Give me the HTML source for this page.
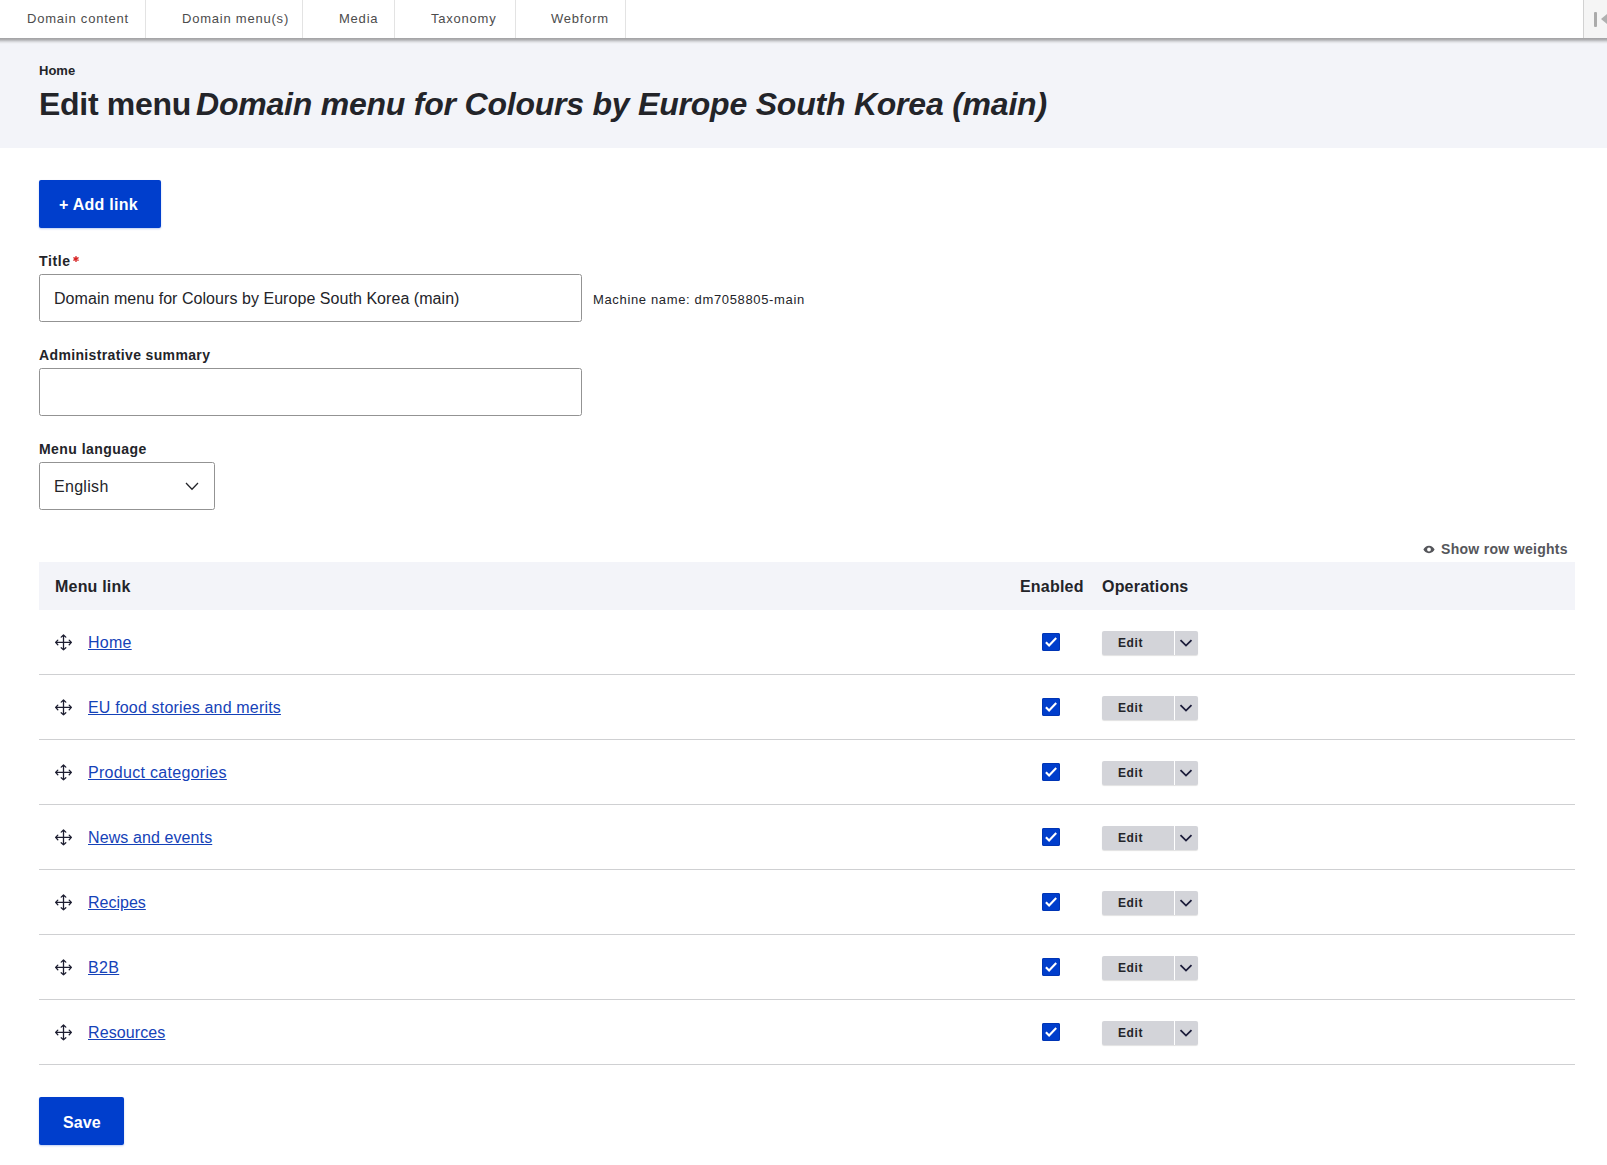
<!DOCTYPE html>
<html><head><meta charset="utf-8">
<style>
*{box-sizing:border-box;margin:0;padding:0}
html,body{width:1607px;height:1165px;overflow:hidden;background:#fff}
body{font-family:"Liberation Sans",sans-serif;color:#232429;position:relative}
.abs{position:absolute;white-space:nowrap}
#toolbar{position:absolute;left:0;top:0;width:1607px;height:38px;background:#fff;z-index:3}
#tbshadow{position:absolute;left:0;top:38px;width:1607px;height:6px;z-index:2;background:linear-gradient(to bottom,#a3a3a5 0px,#a8a8aa 1px,#b4b4b7 2px,#cbccd0 3px,#dfe0e4 4px,#ebecf0 5px,#f3f4f9 6px)}
#toolbar .sep{position:absolute;top:0;width:1px;height:38px;background:#e3e3e3}
#toolbar .tt{position:absolute;top:11px;font-size:13px;line-height:16px;color:#4c4c4c;letter-spacing:.78px;white-space:nowrap}
#header{position:absolute;left:0;top:39px;width:1607px;height:109px;background:#f3f4f9}
.crumb{position:absolute;left:39px;top:63px;font-size:13px;line-height:16px;font-weight:bold;color:#232429}
h1{position:absolute;left:39px;top:84px;font-size:32px;line-height:40px;font-weight:bold;white-space:nowrap;color:#232429;letter-spacing:-.3px}
.btn{position:absolute;background:#003ecc;color:#fff;font-weight:bold;font-size:16px;border-radius:2px;text-align:center;box-shadow:0 1px 2px rgba(0,62,204,.25)}
.label{position:absolute;left:39px;font-size:14px;line-height:18px;font-weight:bold;color:#232429;white-space:nowrap}
.input{position:absolute;left:39px;border:1px solid #939393;border-radius:2.5px;background:#fff;font-size:16px}
.thbg{position:absolute;left:39px;top:562px;width:1536px;height:48px;background:#f3f4f9}
.th{position:absolute;top:577px;font-size:16px;line-height:20px;font-weight:bold;white-space:nowrap;letter-spacing:.2px}
.rowline{position:absolute;left:39px;width:1536px;height:1px;background:#cfd0d2}
.drag{position:absolute}
.mlink{position:absolute;left:88px;font-size:16px;line-height:22px;color:#1542b8;text-decoration:underline;text-underline-offset:1px;white-space:nowrap;letter-spacing:0px}
.cb{position:absolute;left:1042px;width:18px;height:18px;background:#003ecc;border-radius:2px;box-shadow:inset 0 0 0 1px #0035b5}
.cb svg{position:absolute;left:0;top:0}
.ebtn{position:absolute;left:1102px;width:96px;height:24px;background:#d3d4d9;border-radius:2px;box-shadow:0 1px 1px rgba(0,0,0,.12)}
.et{position:absolute;left:16px;top:5px;font-size:12px;line-height:14px;font-weight:bold;color:#232429;letter-spacing:.6px}
.esep{position:absolute;left:72px;top:0;width:1px;height:24px;background:#fff}
.chev{position:absolute;left:77px;top:7px}
</style></head><body>
<div id="toolbar">
  <div class="tt" style="left:27px">Domain content</div>
  <div class="sep" style="left:145px"></div>
  <div class="tt" style="left:182px">Domain menu(s)</div>
  <div class="sep" style="left:302px"></div>
  <div class="tt" style="left:339px">Media</div>
  <div class="sep" style="left:394px"></div>
  <div class="tt" style="left:431px">Taxonomy</div>
  <div class="sep" style="left:515px"></div>
  <div class="tt" style="left:551px">Webform</div>
  <div class="sep" style="left:625px"></div>
  <div class="abs" style="left:1583px;top:0;width:24px;height:38px;border-left:1px solid #d2d2d2;background:#f5f5f5">
    <div class="abs" style="left:10px;top:11.5px;width:3px;height:15px;background:#ababab;border-radius:1px"></div>
    <div class="abs" style="left:17px;top:13.5px;width:0;height:0;border-top:5px solid transparent;border-bottom:5px solid transparent;border-right:6px solid #b0b0b0"></div>
  </div>
</div>
<div id="header"></div><div id="tbshadow"></div>
<div class="crumb">Home</div>
<h1>Edit menu</h1><h1 style="left:196px;letter-spacing:-.22px"><i>Domain menu for Colours by Europe South Korea (main)</i></h1>

<div class="btn" style="left:39px;top:180px;width:122px;height:48px"></div><div class="abs" style="left:59px;top:195px;font-size:16px;line-height:20px;font-weight:bold;color:#fff;letter-spacing:.25px">+ Add link</div>

<div class="label" style="top:252px;letter-spacing:.6px">Title</div>
<svg class="abs" style="left:72.6px;top:255.9px" width="6" height="6" viewBox="0 0 6 6"><path d="M3 0.6V5.4M0.92 1.8L5.08 4.2M0.92 4.2L5.08 1.8" stroke="#d72222" stroke-width="1.35" stroke-linecap="round"/></svg>
<div class="input" style="top:274px;width:543px;height:48px"></div>
<div class="abs" style="left:54px;top:289px;font-size:16px;line-height:20px;letter-spacing:.05px">Domain menu for Colours by Europe South Korea (main)</div>
<div class="abs" style="left:593px;top:292px;font-size:13px;line-height:16px;letter-spacing:.65px">Machine name: dm7058805-main</div>

<div class="label" style="top:346px;letter-spacing:.36px">Administrative summary</div>
<div class="input" style="top:368px;width:543px;height:48px"></div>

<div class="label" style="top:440px;letter-spacing:.45px">Menu language</div>
<div class="input" style="top:462px;width:176px;height:48px"></div>
<div class="abs" style="left:54px;top:477px;font-size:16px;line-height:20px;letter-spacing:.3px">English</div>
<svg class="abs" style="left:184px;top:481px" width="16" height="10" viewBox="0 0 16 10"><path d="M2 2L8 8.3L14 2" fill="none" stroke="#232429" stroke-width="1.25"/></svg>

<svg class="abs" style="left:1423px;top:544.5px" width="12" height="9" viewBox="0 0 12 9"><path d="M6 0.8C3.2 0.8 1.2 3 0.4 4.5C1.2 6 3.2 8.2 6 8.2C8.8 8.2 10.8 6 11.6 4.5C10.8 3 8.8 0.8 6 0.8ZM6 2.6A1.9 1.9 0 1 1 6 6.4A1.9 1.9 0 1 1 6 2.6Z" fill="#55565b" fill-rule="evenodd"/></svg>
<div class="abs" style="left:1441px;top:540px;font-size:14px;line-height:18px;font-weight:bold;color:#55565b;letter-spacing:.3px">Show row weights</div>

<div class="thbg"></div>
<div class="th" style="left:55px">Menu link</div>
<div class="th" style="left:1020px">Enabled</div>
<div class="th" style="left:1102px">Operations</div>

<div class="rowline" style="top:674px"></div>
<svg class="drag" width="20" height="20" viewBox="0 0 20 20" style="left:53px;top:632px"><g fill="none" stroke="#1c1d30" stroke-width="1.3" stroke-linecap="round" stroke-linejoin="round"><path d="M10.5 3V17.8M2.7 10.4H18.3M8.2 5.1L10.5 2.9L12.8 5.1M8.2 15.7L10.5 17.9L12.8 15.7M4.8 8.1L2.6 10.4L4.8 12.7M16.2 8.1L18.4 10.4L16.2 12.7"/></g></svg>
<a class="mlink" style="top:632px;letter-spacing:0.25px">Home</a>
<div class="cb" style="top:633px"><svg width="18" height="18" viewBox="0 0 18 18"><path d="M3.9 9.2L7.1 12.5L14.2 5" fill="none" stroke="#fff" stroke-width="2.1"/></svg></div>
<div class="ebtn" style="top:631px"><span class="et">Edit</span><span class="esep"></span><svg class="chev" width="14" height="10" viewBox="0 0 14 10"><path d="M1.5 2.2L7 7.6L12.5 2.2" fill="none" stroke="#1b1c3a" stroke-width="1.8"/></svg></div>
<div class="rowline" style="top:739px"></div>
<svg class="drag" width="20" height="20" viewBox="0 0 20 20" style="left:53px;top:697px"><g fill="none" stroke="#1c1d30" stroke-width="1.3" stroke-linecap="round" stroke-linejoin="round"><path d="M10.5 3V17.8M2.7 10.4H18.3M8.2 5.1L10.5 2.9L12.8 5.1M8.2 15.7L10.5 17.9L12.8 15.7M4.8 8.1L2.6 10.4L4.8 12.7M16.2 8.1L18.4 10.4L16.2 12.7"/></g></svg>
<a class="mlink" style="top:697px;letter-spacing:0.17px">EU food stories and merits</a>
<div class="cb" style="top:698px"><svg width="18" height="18" viewBox="0 0 18 18"><path d="M3.9 9.2L7.1 12.5L14.2 5" fill="none" stroke="#fff" stroke-width="2.1"/></svg></div>
<div class="ebtn" style="top:696px"><span class="et">Edit</span><span class="esep"></span><svg class="chev" width="14" height="10" viewBox="0 0 14 10"><path d="M1.5 2.2L7 7.6L12.5 2.2" fill="none" stroke="#1b1c3a" stroke-width="1.8"/></svg></div>
<div class="rowline" style="top:804px"></div>
<svg class="drag" width="20" height="20" viewBox="0 0 20 20" style="left:53px;top:762px"><g fill="none" stroke="#1c1d30" stroke-width="1.3" stroke-linecap="round" stroke-linejoin="round"><path d="M10.5 3V17.8M2.7 10.4H18.3M8.2 5.1L10.5 2.9L12.8 5.1M8.2 15.7L10.5 17.9L12.8 15.7M4.8 8.1L2.6 10.4L4.8 12.7M16.2 8.1L18.4 10.4L16.2 12.7"/></g></svg>
<a class="mlink" style="top:762px;letter-spacing:0.3px">Product categories</a>
<div class="cb" style="top:763px"><svg width="18" height="18" viewBox="0 0 18 18"><path d="M3.9 9.2L7.1 12.5L14.2 5" fill="none" stroke="#fff" stroke-width="2.1"/></svg></div>
<div class="ebtn" style="top:761px"><span class="et">Edit</span><span class="esep"></span><svg class="chev" width="14" height="10" viewBox="0 0 14 10"><path d="M1.5 2.2L7 7.6L12.5 2.2" fill="none" stroke="#1b1c3a" stroke-width="1.8"/></svg></div>
<div class="rowline" style="top:869px"></div>
<svg class="drag" width="20" height="20" viewBox="0 0 20 20" style="left:53px;top:827px"><g fill="none" stroke="#1c1d30" stroke-width="1.3" stroke-linecap="round" stroke-linejoin="round"><path d="M10.5 3V17.8M2.7 10.4H18.3M8.2 5.1L10.5 2.9L12.8 5.1M8.2 15.7L10.5 17.9L12.8 15.7M4.8 8.1L2.6 10.4L4.8 12.7M16.2 8.1L18.4 10.4L16.2 12.7"/></g></svg>
<a class="mlink" style="top:827px;letter-spacing:0.1px">News and events</a>
<div class="cb" style="top:828px"><svg width="18" height="18" viewBox="0 0 18 18"><path d="M3.9 9.2L7.1 12.5L14.2 5" fill="none" stroke="#fff" stroke-width="2.1"/></svg></div>
<div class="ebtn" style="top:826px"><span class="et">Edit</span><span class="esep"></span><svg class="chev" width="14" height="10" viewBox="0 0 14 10"><path d="M1.5 2.2L7 7.6L12.5 2.2" fill="none" stroke="#1b1c3a" stroke-width="1.8"/></svg></div>
<div class="rowline" style="top:934px"></div>
<svg class="drag" width="20" height="20" viewBox="0 0 20 20" style="left:53px;top:892px"><g fill="none" stroke="#1c1d30" stroke-width="1.3" stroke-linecap="round" stroke-linejoin="round"><path d="M10.5 3V17.8M2.7 10.4H18.3M8.2 5.1L10.5 2.9L12.8 5.1M8.2 15.7L10.5 17.9L12.8 15.7M4.8 8.1L2.6 10.4L4.8 12.7M16.2 8.1L18.4 10.4L16.2 12.7"/></g></svg>
<a class="mlink" style="top:892px;letter-spacing:0px">Recipes</a>
<div class="cb" style="top:893px"><svg width="18" height="18" viewBox="0 0 18 18"><path d="M3.9 9.2L7.1 12.5L14.2 5" fill="none" stroke="#fff" stroke-width="2.1"/></svg></div>
<div class="ebtn" style="top:891px"><span class="et">Edit</span><span class="esep"></span><svg class="chev" width="14" height="10" viewBox="0 0 14 10"><path d="M1.5 2.2L7 7.6L12.5 2.2" fill="none" stroke="#1b1c3a" stroke-width="1.8"/></svg></div>
<div class="rowline" style="top:999px"></div>
<svg class="drag" width="20" height="20" viewBox="0 0 20 20" style="left:53px;top:957px"><g fill="none" stroke="#1c1d30" stroke-width="1.3" stroke-linecap="round" stroke-linejoin="round"><path d="M10.5 3V17.8M2.7 10.4H18.3M8.2 5.1L10.5 2.9L12.8 5.1M8.2 15.7L10.5 17.9L12.8 15.7M4.8 8.1L2.6 10.4L4.8 12.7M16.2 8.1L18.4 10.4L16.2 12.7"/></g></svg>
<a class="mlink" style="top:957px;letter-spacing:0.33px">B2B</a>
<div class="cb" style="top:958px"><svg width="18" height="18" viewBox="0 0 18 18"><path d="M3.9 9.2L7.1 12.5L14.2 5" fill="none" stroke="#fff" stroke-width="2.1"/></svg></div>
<div class="ebtn" style="top:956px"><span class="et">Edit</span><span class="esep"></span><svg class="chev" width="14" height="10" viewBox="0 0 14 10"><path d="M1.5 2.2L7 7.6L12.5 2.2" fill="none" stroke="#1b1c3a" stroke-width="1.8"/></svg></div>
<div class="rowline" style="top:1064px"></div>
<svg class="drag" width="20" height="20" viewBox="0 0 20 20" style="left:53px;top:1022px"><g fill="none" stroke="#1c1d30" stroke-width="1.3" stroke-linecap="round" stroke-linejoin="round"><path d="M10.5 3V17.8M2.7 10.4H18.3M8.2 5.1L10.5 2.9L12.8 5.1M8.2 15.7L10.5 17.9L12.8 15.7M4.8 8.1L2.6 10.4L4.8 12.7M16.2 8.1L18.4 10.4L16.2 12.7"/></g></svg>
<a class="mlink" style="top:1022px;letter-spacing:0.1px">Resources</a>
<div class="cb" style="top:1023px"><svg width="18" height="18" viewBox="0 0 18 18"><path d="M3.9 9.2L7.1 12.5L14.2 5" fill="none" stroke="#fff" stroke-width="2.1"/></svg></div>
<div class="ebtn" style="top:1021px"><span class="et">Edit</span><span class="esep"></span><svg class="chev" width="14" height="10" viewBox="0 0 14 10"><path d="M1.5 2.2L7 7.6L12.5 2.2" fill="none" stroke="#1b1c3a" stroke-width="1.8"/></svg></div>

<div class="btn" style="left:39px;top:1097px;width:85px;height:48px"></div><div class="abs" style="left:63px;top:1113px;font-size:16px;line-height:20px;font-weight:bold;color:#fff;letter-spacing:.1px">Save</div>
</body></html>
